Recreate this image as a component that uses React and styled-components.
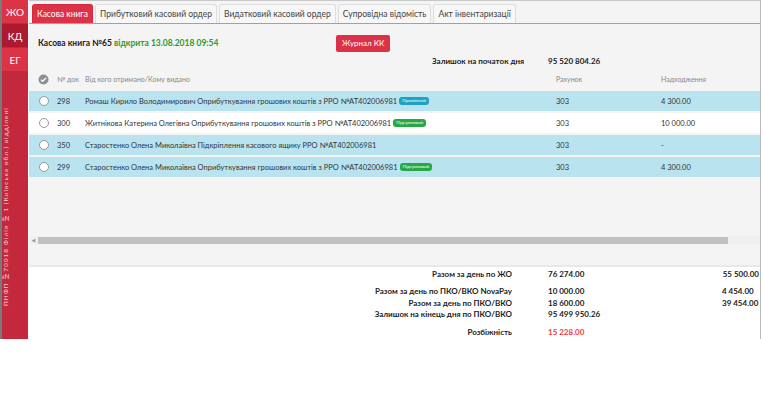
import React from 'react';
import styled, { createGlobalStyle } from 'styled-components';

const Global = createGlobalStyle`
  body {
    margin: 0;
    background: #fff;
    font-family: Lato, "Open Sans", "DejaVu Sans", sans-serif;
    color: #333;
  }
`;

const Page = styled.div`
  display: flex;
  width: 761px;
  height: 339px;
`;

const Sidebar = styled.div`
  flex: 0 0 26px;
  display: flex;
  flex-direction: column;
  background: #c4283d;
  border-left: 2px solid #7a7a7a;
`;

const SideButton = styled.div`
  height: 23px;
  margin-bottom: 1px;
  display: flex;
  align-items: center;
  justify-content: center;
  color: #fff;
  font-size: 10px;
  background: ${(p) => (p.$active ? '#ad1a30' : '#dc3447')};
`;

const SideText = styled.div`
  flex: 1;
  display: flex;
  justify-content: center;
  padding: 6px 0 8px;
  writing-mode: vertical-rl;
  transform: rotate(180deg);
  color: #f6d6db;
  font-size: 6.5px;
  letter-spacing: 1px;
  white-space: nowrap;
  overflow: hidden;
`;

const Main = styled.div`
  flex: 1;
  min-width: 0;
  display: flex;
  flex-direction: column;
  border-top: 1px solid #c8c8c8;
  border-right: 1px solid #b8b8b8;
  margin-left: 1px;
`;

const Panel = styled.div`
  height: 264px;
  background: #f4f4f4;
  border-bottom: 2px solid #e8e8e8;
  display: flex;
  flex-direction: column;
`;

const Tabs = styled.div`
  display: flex;
  gap: 2px;
  padding: 3px 0 0 3px;
  border-bottom: 1px solid #e6828d;
`;

const Tab = styled.div`
  height: 18px;
  padding: 0 4px;
  display: flex;
  align-items: center;
  font-size: 8.5px;
  border: 1px solid ${(p) => (p.$active ? '#d8293f' : '#dedede')};
  border-bottom: none;
  border-radius: 3px 3px 0 0;
  background: ${(p) => (p.$active ? '#dc3146' : '#f7f7f7')};
  color: ${(p) => (p.$active ? '#fff' : '#444')};
`;

const TitleRow = styled.div`
  display: flex;
  align-items: center;
  margin-top: 10px;
  height: 18px;
`;

const Title = styled.div`
  width: 298px;
  padding-left: 9px;
  font-size: 8.5px;
  font-weight: bold;
  color: #222;
`;

const Green = styled.span`
  color: #2e9a2e;
`;

const RedButton = styled.div`
  height: 17px;
  padding: 0 6px;
  display: flex;
  align-items: center;
  background: #dc3146;
  color: #fff;
  font-size: 8px;
  border-radius: 2px;
`;

const BalanceRow = styled.div`
  display: flex;
  margin-top: 4px;
  line-height: 11px;
  padding-left: 403px;
  font-size: 8px;
  font-weight: bold;
  color: #222;
`;

const BalanceLabel = styled.div`
  width: 116px;
`;

const Grid = styled.div`
  display: grid;
  grid-template-columns: 28px 28px 471px 105px 1fr;
  align-items: center;
  height: ${(p) => (p.$head ? '16px' : '20px')};
  margin-top: ${(p) => (p.$head ? '4px' : '0')};
  margin-bottom: ${(p) => (p.$head ? '4px' : '2px')};
  font-size: ${(p) => (p.$head ? '7px' : '7.5px')};
  color: ${(p) => (p.$head ? '#888' : '#333')};
  background: ${(p) => p.$bg || 'transparent'};
`;

const Cell = styled.div`
  white-space: nowrap;
  display: flex;
  align-items: center;
  gap: 2px;
`;

const Radio = styled.div`
  justify-self: center;
  margin-left: 1px;
  width: 8px;
  height: 8px;
  border-radius: 50%;
  border: 1px solid #999;
  background: #fff;
`;

const Badge = styled.span`
  display: inline-block;
  padding: 0 3px;
  height: 8px;
  line-height: 8px;
  font-size: 4.5px;
  color: #fff;
  border-radius: 3px;
  background: ${(p) => (p.$kind === 'mid' ? '#1da2c2' : '#28a745')};
`;

const Spacer = styled.div`
  flex: 1;
`;

const ScrollBar = styled.div`
  display: flex;
  align-items: center;
  height: 8px;
  margin-bottom: 21px;
  background: #f0f0f0;
`;

const ScrollArrow = styled.div`
  width: 9px;
  font-size: 5px;
  color: #999;
  text-align: center;
`;

const ScrollThumb = styled.div`
  width: 690px;
  height: 7px;
  background: #c1c1c1;
`;

const Totals = styled.div`
  padding-top: 2px;
  font-size: 8px;
  font-weight: bold;
  color: #222;
  line-height: 11.5px;
`;

const TotalRow = styled.div`
  display: grid;
  grid-template-columns: 519px 174px 1fr;
  margin-top: ${(p) => p.$mt || 0}px;
  white-space: nowrap;
`;

const TotalLabel = styled.div`
  text-align: right;
  padding-right: 36px;
`;

const TotalValue = styled.div`
  color: ${(p) => (p.$red ? '#f23a3a' : 'inherit')};
  text-align: ${(p) => (p.$right ? 'right' : 'left')};
  margin-right: ${(p) => (p.$right ? '1px' : '0')};
`;

const rows = [
  { n: '298', text: 'Ромаш Кирило Володимирович Оприбуткування грошових коштів з РРО №AT402006981', badge: 'mid', acc: '303', sum: '4 300.00', bg: '#bae3f0' },
  { n: '300', text: 'Житнікова Катерина Олегівна Оприбуткування грошових коштів з РРО №AT402006981', badge: 'sum', acc: '303', sum: '10 000.00', bg: '#fff' },
  { n: '350', text: 'Старостенко Олена Миколаївна Підкріплення касового ящику РРО №AT402006981', acc: '303', sum: '-', bg: '#bae3f0' },
  { n: '299', text: 'Старостенко Олена Миколаївна Оприбуткування грошових коштів з РРО №AT402006981', badge: 'sum', acc: '303', sum: '4 300.00', bg: '#bae3f0' },
];

const totals = [
  { label: 'Разом за день по ЖО', value: '76 274.00', extra: '55 500.00', right: true },
  { label: 'Разом за день по ПКО/ВКО NovaPay', value: '10 000.00', extra: '4 454.00', mt: 5.5 },
  { label: 'Разом за день по ПКО/ВКО', value: '18 600.00', extra: '39 454.00' },
  { label: 'Залишок на кінець дня по ПКО/ВКО', value: '95 499 950.26' },
  { label: 'Розбіжність', value: '15 228.00', red: true, mt: 6.5 },
];

function CheckIcon() {
  return (
    <svg width="11" height="11" viewBox="0 0 12 12" style={{ justifySelf: 'center', marginLeft: 1 }}>
      <circle cx="6" cy="6" r="5.5" fill="#8a8f96" />
      <path d="M3.2 6.2 L5.2 8 L8.8 4.2" stroke="#fff" strokeWidth="1.5" fill="none" />
    </svg>
  );
}

export default function App() {
  return (
    <>
      <Global />
      <Page>
        <Sidebar>
          <SideButton>ЖО</SideButton>
          <SideButton $active>КД</SideButton>
          <SideButton>ЕГ</SideButton>
          <SideText>ПНФП №70018 Філія № 1 (Київська обл.) відділені</SideText>
        </Sidebar>
        <Main>
          <Panel>
            <Tabs>
              <Tab $active>Касова книга</Tab>
              <Tab>Прибутковий касовий ордер</Tab>
              <Tab>Видатковий касовий ордер</Tab>
              <Tab>Супровідна відомість</Tab>
              <Tab>Акт інвентаризації</Tab>
            </Tabs>
            <TitleRow>
              <Title>
                Касова книга №65 <Green>відкрита 13.08.2018 09:54</Green>
              </Title>
              <RedButton>Журнал КК</RedButton>
            </TitleRow>
            <BalanceRow>
              <BalanceLabel>Залишок на початок дня</BalanceLabel>
              <div>95 520 804.26</div>
            </BalanceRow>
            <Grid $head>
              <CheckIcon />
              <Cell>№ док</Cell>
              <Cell>Від кого отримано/Кому видано</Cell>
              <Cell>Рахунок</Cell>
              <Cell>Надходження</Cell>
            </Grid>
            {rows.map((r) => (
              <Grid key={r.n} $bg={r.bg}>
                <Radio />
                <Cell>{r.n}</Cell>
                <Cell>
                  {r.text}
                  {r.badge && <Badge $kind={r.badge}>{r.badge === 'mid' ? 'Проміжний' : 'Підсумковий'}</Badge>}
                </Cell>
                <Cell>{r.acc}</Cell>
                <Cell>{r.sum}</Cell>
              </Grid>
            ))}
            <Spacer />
            <ScrollBar>
              <ScrollArrow>◀</ScrollArrow>
              <ScrollThumb />
            </ScrollBar>
          </Panel>
          <Totals>
            {totals.map((t) => (
              <TotalRow key={t.label} $mt={t.mt}>
                <TotalLabel>{t.label}</TotalLabel>
                <TotalValue $red={t.red}>{t.value}</TotalValue>
                <TotalValue $right={t.right}>{t.extra}</TotalValue>
              </TotalRow>
            ))}
          </Totals>
        </Main>
      </Page>
    </>
  );
}
